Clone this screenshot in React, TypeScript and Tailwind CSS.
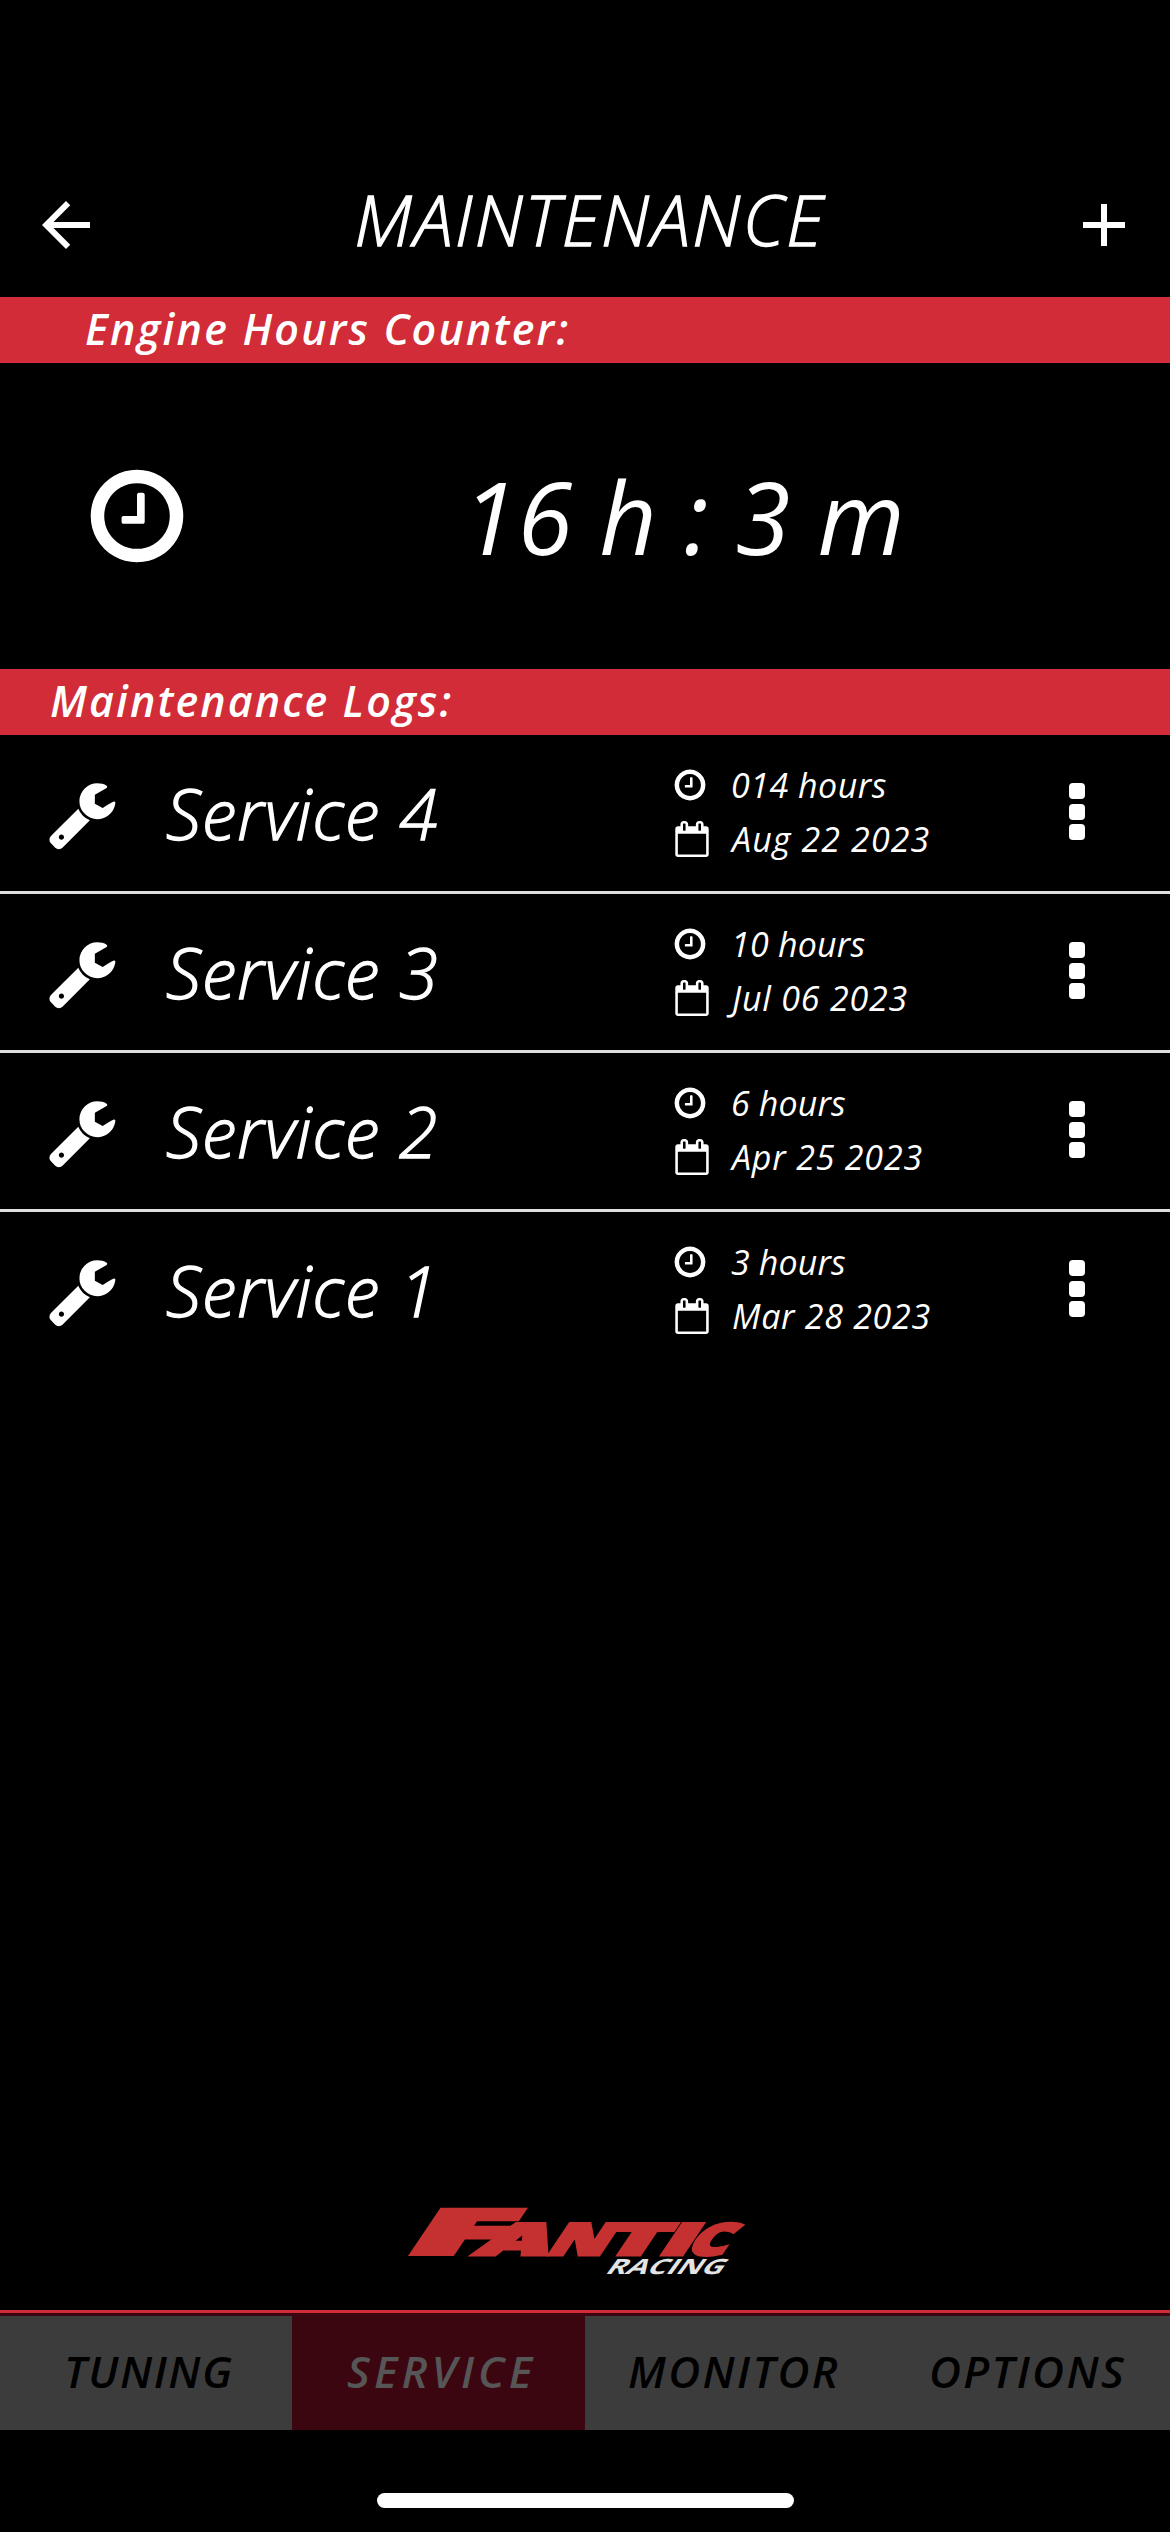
import React from 'react'
import { MdAdd, MdArrowBack } from 'react-icons/md'

interface IconProps {
  className?: string
}

interface Log {
  name: string
  hours: string
  date: string
  hoursTracking: string
  dateTracking: string
}

const logs: Log[] = [
  { name: 'Service 4', hours: '014 hours', date: 'Aug 22 2023', hoursTracking: 'tracking-[0.5px]', dateTracking: 'tracking-[1.1px]' },
  { name: 'Service 3', hours: '10 hours', date: 'Jul 06 2023', hoursTracking: 'tracking-[0.2px]', dateTracking: 'tracking-[0.8px]' },
  { name: 'Service 2', hours: '6 hours', date: 'Apr 25 2023', hoursTracking: 'tracking-[0.1px]', dateTracking: 'tracking-[0.8px]' },
  { name: 'Service 1', hours: '3 hours', date: 'Mar 28 2023', hoursTracking: 'tracking-[0.1px]', dateTracking: 'tracking-[0.7px]' },
]

const tabs = [
  { label: 'TUNING', style: 'w-[292px] pl-[64px] tracking-[1.6px]' },
  { label: 'SERVICE', style: 'w-[293px] pl-[55px] bg-[#3c0610] text-[#565656] tracking-[4.2px]' },
  { label: 'MONITOR', style: 'w-[292px] pl-[43px] tracking-[2.4px]' },
  { label: 'OPTIONS', style: 'w-[293px] pl-[52px] tracking-[2.4px]' },
]

const logoLetters = [
  { char: 'A', x: 66, width: 72 },
  { char: 'N', x: 137, width: 60 },
  { char: 'T', x: 193, width: 58 },
  { char: 'I', x: 249, width: 32 },
  { char: 'C', x: 277, width: 40 },
]

function ClockIcon({ className }: IconProps) {
  return (
    <svg viewBox="0 0 1792 1792" fill="currentColor" className={className}>
      <path d="M1024 544v448q0 14-9 23t-23 9h-320q-14 0-23-9t-9-23v-64q0-14 9-23t23-9h224v-352q0-14 9-23t23-9h64q14 0 23 9t9 23zm416 352q0-148-73-273t-198-198-273-73-273 73-198 198-73 273 73 273 198 198 273 73 273-73 198-198 73-273zm224 0q0 209-103 385.500t-279.500 279.500-385.500 103-385.500-103-279.500-279.500-103-385.500 103-385.500 279.500-279.500 385.500-103 385.500 103 279.500 279.500 103 385.500z" />
    </svg>
  )
}

function CalendarIcon({ className }: IconProps) {
  return (
    <svg viewBox="0 0 1792 1792" fill="currentColor" className={className}>
      <path d="M192 1664h1408v-1024h-1408v1024zm384-1216v-288q0-14-9-23t-23-9h-64q-14 0-23 9t-9 23v288q0 14 9 23t23 9h64q14 0 23-9t9-23zm768 0v-288q0-14-9-23t-23-9h-64q-14 0-23 9t-9 23v288q0 14 9 23t23 9h64q14 0 23-9t9-23zm384-64v1280q0 52-38 90t-90 38h-1408q-52 0-90-38t-38-90v-1280q0-52 38-90t90-38h128v-96q0-66 47-113t113-47h64q66 0 113 47t47 113v96h384v-96q0-66 47-113t113-47h64q66 0 113 47t47 113v96h128q52 0 90 38t38 90z" />
    </svg>
  )
}

function WrenchIcon({ className }: IconProps) {
  return (
    <svg viewBox="0 0 1792 1792" fill="currentColor" className={className}>
      <path d="M448 1472q0-26-19-45t-45-19-45 19-19 45 19 45 45 19 45-19 19-45zm644-420l-682 682q-37 37-90 37-52 0-91-37l-106-108q-38-36-38-90 0-53 38-91l681-681q39 98 114.500 173.500t173.500 114.500zm634-435q0 39-23 106-47 134-164.500 217.500t-258.500 83.500q-185 0-316.500-131.500t-131.500-316.500 131.500-316.500 316.500-131.500q58 0 121.500 16.500t107.500 46.500q16 11 16 28t-16 28l-293 169v224l193 107q5-3 79-48.500t135.500-81 70.500-35.500q15 0 23.500 10t8.500 25z" />
    </svg>
  )
}

function Logo() {
  return (
    <svg viewBox="0 0 350 80" className="h-20 w-[350px] overflow-visible not-italic">
      <g fill="#c53030" stroke="#c53030" fontWeight="800" fontFamily="'Open Sans', sans-serif">
        <g transform="translate(0 50) skewX(-34)" strokeWidth="3" fontSize="44">
          {logoLetters.map(({ char, x, width }) => (
            <text key={char} x={x} y="-1.500" textLength={width} lengthAdjust="spacingAndGlyphs">
              {char}
            </text>
          ))}
        </g>
        <text
          transform="translate(0 50) skewX(-34)"
          x="-6"
          y="-2"
          strokeWidth="4"
          fontSize="62"
          textLength="97"
          lengthAdjust="spacingAndGlyphs"
        >
          F
        </text>
      </g>
      <text
        transform="translate(198 68) skewX(-36)"
        fill="#e4e4e4"
        fontFamily="'Open Sans', sans-serif"
        fontWeight="700"
        fontSize="21"
        textLength="117"
        lengthAdjust="spacingAndGlyphs"
      >
        RACING
      </text>
    </svg>
  )
}

function SectionBar({ children, className }: { children: React.ReactNode; className: string }) {
  return (
    <h2 className={`flex h-[66px] items-center bg-[#d12c37] pb-[3px] text-[43px] font-semibold leading-none ${className}`}>
      {children}
    </h2>
  )
}

function LogRow({ log }: { log: Log }) {
  return (
    <li className="flex h-[159px] items-center border-b-[3px] border-[#dee0de] pl-[46px] last:border-transparent">
      <WrenchIcon className="mt-0.5 size-[72px]" />
      <p className="ml-[48px] w-[506px] text-[70px] font-light leading-none tracking-[0.8px] [-webkit-text-stroke:1.3px_white]">
        {log.name}
      </p>
      <div className="w-[394px] pb-0.5 text-[34px] leading-[54px]">
        <div className="flex items-center">
          <ClockIcon className="size-9" />
          <span className={`ml-[23px] ${log.hoursTracking}`}>{log.hours}</span>
        </div>
        <div className="flex items-center">
          <CalendarIcon className="ml-[2px] size-9" />
          <span className={`ml-[22px] ${log.dateTracking}`}>{log.date}</span>
        </div>
      </div>
      <button className="mb-[3px] ml-[3px] flex flex-col gap-[4.5px]">
        <span className="size-4 rounded bg-white" />
        <span className="size-4 rounded bg-white" />
        <span className="size-4 rounded bg-white" />
      </button>
    </li>
  )
}

function App() {
  return (
    <div className="flex h-[2532px] w-[1170px] flex-col overflow-hidden bg-black font-['Open_Sans',sans-serif] text-white italic">
      <header className="flex h-[297px] items-center justify-between px-[30px] pt-[153px]">
        <MdArrowBack className="size-[72px]" />
        <h1 className="-mt-3 ml-2.5 text-[70px] font-light leading-none tracking-[2.3px] [-webkit-text-stroke:1.3px_white]">
          MAINTENANCE
        </h1>
        <MdAdd className="size-[72px]" />
      </header>

      <SectionBar className="pl-[85px] tracking-[2.2px]">Engine Hours Counter:</SectionBar>
      <section className="flex h-[306px] items-center pl-[83px]">
        <ClockIcon className="size-[108px]" />
        <p className="ml-[271px] text-[100px] leading-none tracking-[0.4px]">16 h : 3 m</p>
      </section>

      <SectionBar className="pl-[50px] tracking-[2.1px]">Maintenance Logs:</SectionBar>
      <ul className="flex-1">
        {logs.map((log) => (
          <LogRow key={log.name} log={log} />
        ))}
      </ul>

      <div className="flex h-[104px] pl-[406px]">
        <Logo />
      </div>
      <nav className="flex h-[120px] border-t-[3px] border-[#d12c37] bg-[#3c3c3c] text-[44px] font-semibold text-black">
        {tabs.map((tab) => (
          <button key={tab.label} className={`border-t-[3px] border-[#3c0610] pb-[5px] text-left italic ${tab.style}`}>
            {tab.label}
          </button>
        ))}
      </nav>
      <footer className="flex h-[102px] items-end justify-center pb-6">
        <div className="h-[15px] w-[417px] rounded-full bg-white" />
      </footer>
    </div>
  )
}

export default App
